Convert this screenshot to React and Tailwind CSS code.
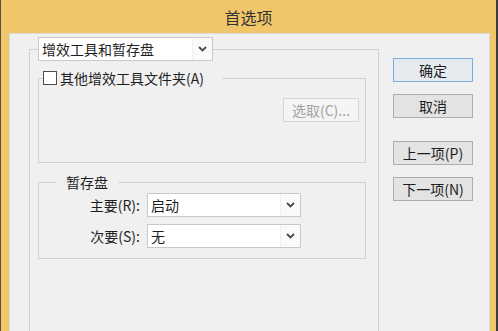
import React from "react";

const font = "font-['Noto_Sans_CJK_SC','Noto_Sans',sans-serif]";

function Chevron() {
  return (
    <svg width="9" height="6" viewBox="0 0 9 6" className="block">
      <path d="M1 1 L4.5 4.5 L8 1" fill="none" stroke="#4a4a4a" strokeWidth="1.8" />
    </svg>
  );
}

function Select({ value, width, text }) {
  return (
    <div
      className={`flex h-[24px] ${width} border border-[#c9c9c9] bg-white`}
    >
      <div className={`flex-1 pl-[3px] ${text} leading-[22px] text-[#1e1e1e]`}>{value}</div>
      <div className="flex w-[20px] items-center justify-center border-l border-[#f0f0f0] bg-[#fafafa]">
        <Chevron />
      </div>
    </div>
  );
}

function Btn({ children, primary }) {
  return (
    <div
      className={`flex h-[24px] w-[80px] items-center justify-center border text-[14px] leading-[22px] text-[#1e1e1e] ${
        primary ? "border-[#7aaee0] bg-[#e6ebf0]" : "border-[#adadad] bg-[#e3e3e3]"
      }`}
    >
      {children}
    </div>
  );
}

export default function App() {
  return (
    <div
      className={`${font} flex h-[331px] w-[498px] flex-col overflow-hidden border-l border-r-2 border-l-[#5a5040] border-r-[#3c3c3c] bg-[#f0c66a]`}
    >
      <div className="flex h-[33px] shrink-0 items-center justify-center text-[16px] text-[#333333]">
        首选项
      </div>
      <div className="ml-[8px] flex h-[400px] w-[481px] shrink-0 border border-[#dcdcdc] bg-[#f0f0f0]">
        <fieldset className="ml-[19px] mt-[3px] h-[360px] w-[350px] shrink-0 border border-[#d2d2d2]">
          <legend className="ml-[8px]">
            <Select value="增效工具和暂存盘" width="w-[175px]" text="text-[14px]" />
          </legend>
          <fieldset className="ml-[8px] mt-[8px] w-[328px] border border-[#d2d2d2]">
            <legend className="ml-[4px] flex h-[18px] items-center pr-[18px]">
              <span className="h-[14px] w-[14px] border border-[#4d4d4d] bg-white" />
              <span className="ml-[3px] text-[14px] leading-[18px] text-[#1e1e1e]">
                其他增效工具文件夹(A)
              </span>
            </legend>
            <div className="flex h-[75px] items-start justify-end pr-[6px] pt-[11px]">
              <div className="flex h-[24px] w-[76px] items-center justify-center border border-[#d6d6d6] bg-[#f4f4f4] text-[14px] leading-[22px] text-[#a3a3a3]">
                选取(C)...
              </div>
            </div>
          </fieldset>
          <fieldset className="ml-[8px] mt-[9px] w-[328px] border border-[#d2d2d2]">
            <legend className="ml-[17px] h-[20px] px-[10px] text-[14px] leading-[20px] text-[#1e1e1e]">
              暂存盘
            </legend>
            <div className="flex flex-col gap-[7px] pb-[10px] pt-[1px]">
              <div className="flex items-center">
                <div className="w-[101px] text-right text-[14px] leading-[24px] text-[#1e1e1e]">主要(R):</div>
                <div className="ml-[7px]">
                  <Select value="启动" width="w-[154px]" text="text-[14px]" />
                </div>
              </div>
              <div className="flex items-center">
                <div className="w-[101px] text-right text-[14px] leading-[24px] text-[#1e1e1e]">次要(S):</div>
                <div className="ml-[7px]">
                  <Select value="无" width="w-[154px]" text="text-[14px]" />
                </div>
              </div>
            </div>
          </fieldset>
        </fieldset>
        <div className="ml-[14px] mt-[24px] flex flex-col">
          <Btn primary>确定</Btn>
          <div className="mt-[12px]">
            <Btn>取消</Btn>
          </div>
          <div className="mt-[23px]">
            <Btn>上一项(P)</Btn>
          </div>
          <div className="mt-[12px]">
            <Btn>下一项(N)</Btn>
          </div>
        </div>
      </div>
    </div>
  );
}
